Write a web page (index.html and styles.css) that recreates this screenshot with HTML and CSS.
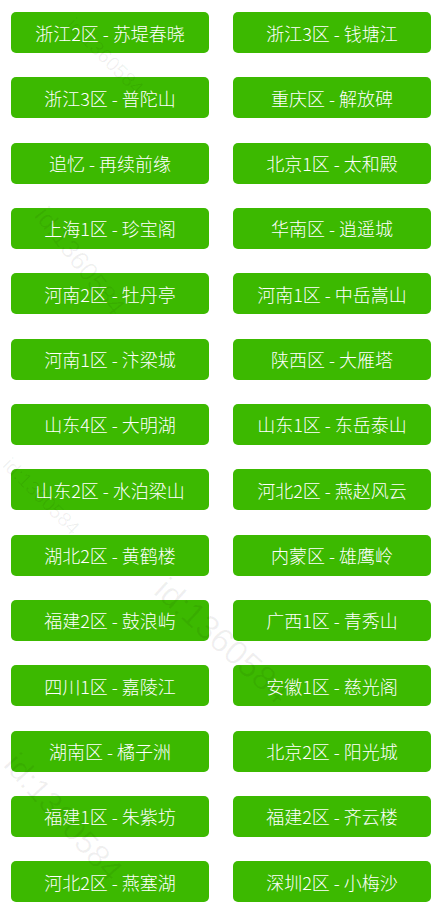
FILE: index.html
```html
<!DOCTYPE html>
<html lang="zh-CN">

<head>
    <meta charset="UTF-8">
    <meta name="viewport" content="width=device-width, initial-scale=1.0">
    <title>选择大区</title>
    <link rel="stylesheet" href="styles.css">
</head>

<body>
    <div class="server-list">
        <a class="server">浙江2区 - 苏堤春晓</a>
        <a class="server">浙江3区 - 钱塘江</a>
        <a class="server">浙江3区 - 普陀山</a>
        <a class="server">重庆区 - 解放碑</a>
        <a class="server">追忆 - 再续前缘</a>
        <a class="server">北京1区 - 太和殿</a>
        <a class="server">上海1区 - 珍宝阁</a>
        <a class="server">华南区 - 逍遥城</a>
        <a class="server">河南2区 - 牡丹亭</a>
        <a class="server">河南1区 - 中岳嵩山</a>
        <a class="server">河南1区 - 汴梁城</a>
        <a class="server">陕西区 - 大雁塔</a>
        <a class="server">山东4区 - 大明湖</a>
        <a class="server">山东1区 - 东岳泰山</a>
        <a class="server">山东2区 - 水泊梁山</a>
        <a class="server">河北2区 - 燕赵风云</a>
        <a class="server">湖北2区 - 黄鹤楼</a>
        <a class="server">内蒙区 - 雄鹰岭</a>
        <a class="server">福建2区 - 鼓浪屿</a>
        <a class="server">广西1区 - 青秀山</a>
        <a class="server">四川1区 - 嘉陵江</a>
        <a class="server">安徽1区 - 慈光阁</a>
        <a class="server">湖南区 - 橘子洲</a>
        <a class="server">北京2区 - 阳光城</a>
        <a class="server">福建1区 - 朱紫坊</a>
        <a class="server">福建2区 - 齐云楼</a>
        <a class="server">河北2区 - 燕塞湖</a>
        <a class="server">深圳2区 - 小梅沙</a>
    </div>

    <!-- watermark -->
    <span class="mark mark-1">id:1360584</span>
    <span class="mark mark-2">id:1360584</span>
    <span class="mark mark-3">id:1360584</span>
    <span class="mark mark-4">id:1360584</span>
    <span class="mark mark-5">id:1360584</span>
</body>

</html>
```

FILE: styles.css
```css
body {
    margin: 0;
    background-color: #fff;
    font-family: "Noto Sans CJK SC", sans-serif;
    overflow: hidden;
}

.server-list {
    display: grid;
    grid-template-columns: 198px 198px;
    column-gap: 24px;
    row-gap: 24.33px;
    padding: 12px 10px 0 11px;
}

.server {
    display: flex;
    align-items: center;
    justify-content: center;
    height: 41px;
    background-color: #3cb900;
    color: #fff;
    font-size: 18px;
    font-weight: 300;
    border-radius: 5px;
    text-decoration: none;
    cursor: pointer;
}

.mark {
    position: absolute;
    color: rgba(0, 0, 0, 0.06);
    font-family: "Liberation Sans", sans-serif;
    white-space: nowrap;
    transform-origin: left center;
    pointer-events: none;
}

.mark-1 {
    left: 70px;
    top: 10px;
    font-size: 20px;
    transform: rotate(45deg);
}

.mark-2 {
    left: 40px;
    top: 195px;
    font-size: 26px;
    transform: rotate(52deg);
}

.mark-3 {
    left: 160px;
    top: 565px;
    font-size: 34px;
    transform: rotate(42deg);
}

.mark-4 {
    left: 10px;
    top: 740px;
    font-size: 32px;
    transform: rotate(48deg);
}

.mark-5 {
    left: 6px;
    top: 450px;
    font-size: 20px;
    transform: rotate(45deg);
}
```
